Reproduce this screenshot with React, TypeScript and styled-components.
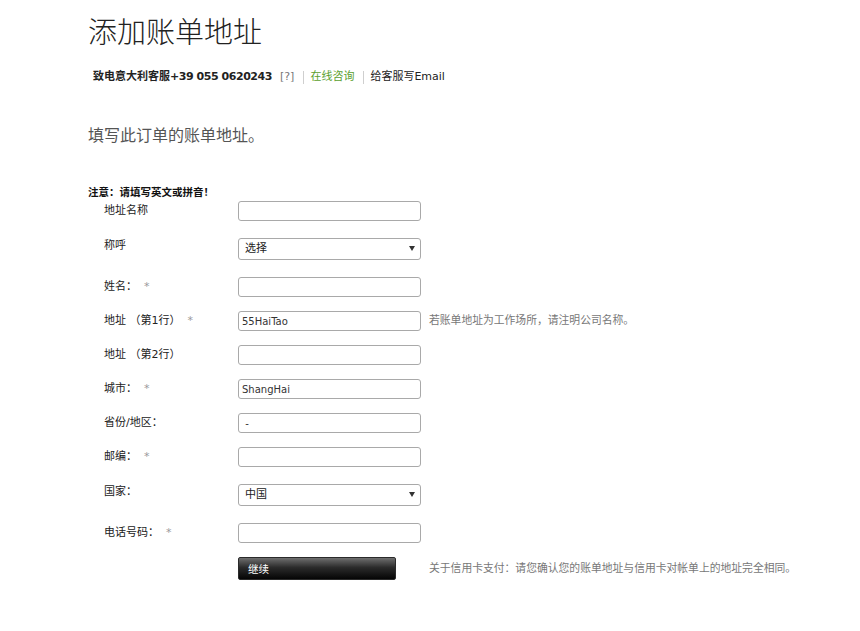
import React from "react";
import styled, { createGlobalStyle } from "styled-components";

const GlobalStyle = createGlobalStyle`
  html, body {
    margin: 0;
    padding: 0;
    background: #ffffff;
  }
  body {
    font-family: "DejaVu Sans", "Noto Sans CJK SC", sans-serif;
    color: #222;
  }
`;

const Page = styled.div`
  padding: 16px 0 40px 88px;
  width: 772px;
`;

const Title = styled.h1`
  margin: 0;
  font-family: "Liberation Serif", "Noto Sans CJK SC", serif;
  font-weight: 300;
  font-size: 29px;
  line-height: 35px;
  color: #222;
`;

const ContactBar = styled.div`
  margin-top: 19px;
  padding-left: 5px;
  display: flex;
  align-items: center;
  font-size: 11px;
  line-height: 14px;
  color: #222;
`;

const Phone = styled.span`
  font-weight: bold;
`;

const PhoneNumber = styled.span`
  letter-spacing: -0.45px;
`;

const Help = styled.span`
  color: #777;
  margin-left: 8px;
`;

const Sep = styled.span`
  display: inline-block;
  width: 1px;
  height: 13px;
  background: #cfcfcf;
  margin: 0 6px 0 9px;
`;

const BarLink = styled.a<{ $green?: boolean }>`
  color: ${(p) => (p.$green ? "#5c9f2f" : "#222")};
  text-decoration: none;
`;

const Subtitle = styled.h2`
  margin: 42px 0 0;
  font-family: "Liberation Serif", "Noto Sans CJK SC", serif;
  font-weight: normal;
  font-size: 16px;
  line-height: 20px;
  color: #555;
`;

const Note = styled.p`
  margin: 40px 0 0;
  font-size: 10.5px;
  line-height: 12px;
  font-weight: bold;
  color: #111;
`;

const Form = styled.form`
  margin-top: 3px;
  display: flex;
  flex-direction: column;
`;

const Row = styled.div<{ $select?: boolean; $last?: boolean }>`
  display: flex;
  align-items: ${(p) => (p.$last ? "center" : "flex-start")};
  padding-top: ${(p) => (p.$select ? "2px" : "0")};
  padding-bottom: ${(p) => (p.$select ? "18px" : p.$last ? "0" : "14px")};
`;

const Label = styled.label<{ $select?: boolean }>`
  width: 134px;
  flex: none;
  padding-left: 16px;
  font-size: 11px;
  line-height: 20px;
  margin-top: ${(p) => (p.$select ? "-1px" : "0")};
  color: #222;
  white-space: pre;
`;

const Star = styled.span`
  color: #999;
  margin-left: 7px;
`;

const TextInput = styled.input`
  box-sizing: border-box;
  width: 183px;
  height: 20px;
  border: 1px solid #a9a9a9;
  border-radius: 3px;
  padding: 0 3px;
  font-family: "DejaVu Sans", "Noto Sans CJK SC", sans-serif;
  font-size: 10px;
  color: #333;
  background: #fff;
  outline: none;
`;

const SelectWrap = styled.div`
  position: relative;
  width: 183px;
  height: 22px;
  &::after {
    content: "";
    position: absolute;
    right: 6px;
    top: 9px;
    border-left: 3px solid transparent;
    border-right: 3px solid transparent;
    border-top: 5px solid #333;
    pointer-events: none;
  }
`;

const Select = styled.select`
  appearance: none;
  box-sizing: border-box;
  width: 100%;
  height: 22px;
  border: 1px solid #a9a9a9;
  border-radius: 3px;
  padding: 0 6px;
  font-family: "DejaVu Sans", "Noto Sans CJK SC", sans-serif;
  font-size: 11px;
  color: #222;
  background: #fff;
  outline: none;
`;

const Hint = styled.span`
  margin-left: 8px;
  font-size: 10.8px;
  line-height: 20px;
  color: #777;
  white-space: nowrap;
`;

const Spacer = styled.div`
  width: 150px;
  flex: none;
`;

const Button = styled.button`
  box-sizing: border-box;
  width: 158px;
  height: 23px;
  border: 1px solid #2a2a2a;
  border-radius: 2px;
  background: linear-gradient(to bottom, #6e6e6e 0%, #2b2b2b 45%, #050505 100%);
  color: #fff;
  text-align: left;
  padding: 0 9px;
  font-family: "DejaVu Sans", "Noto Sans CJK SC", sans-serif;
  font-size: 10.5px;
  cursor: pointer;
`;

const ButtonHint = styled(Hint)`
  margin-left: 33px;
`;

type Field = {
  label: string;
  required?: boolean;
  select?: string[];
  value?: string;
  hint?: string;
};

const fields: Field[] = [
  { label: "地址名称" },
  { label: "称呼", select: ["选择", "先生", "女士"] },
  { label: "姓名：", required: true },
  { label: "地址 （第1行）", required: true, value: "55HaiTao", hint: "若账单地址为工作场所，请注明公司名称。" },
  { label: "地址 （第2行）" },
  { label: "城市：", required: true, value: "ShangHai" },
  { label: "省份/地区：", value: " -" },
  { label: "邮编：", required: true },
  { label: "国家：", select: ["中国", "意大利"] },
  { label: "电话号码：", required: true },
];

export default function App() {
  return (
    <>
      <GlobalStyle />
      <Page>
        <Title>添加账单地址</Title>
        <ContactBar>
          <Phone>
            致电意大利客服<PhoneNumber>+39 055 0620243</PhoneNumber>
          </Phone>
          <Help>[?]</Help>
          <Sep />
          <BarLink $green href="#">在线咨询</BarLink>
          <Sep />
          <BarLink href="#">给客服写Email</BarLink>
        </ContactBar>
        <Subtitle>填写此订单的账单地址。</Subtitle>
        <Note>注意：请填写英文或拼音！</Note>
        <Form onSubmit={(e) => e.preventDefault()}>
          {fields.map((f) => (
            <Row key={f.label} $select={!!f.select}>
              <Label $select={!!f.select}>
                {f.label}
                {f.required && <Star>*</Star>}
              </Label>
              {f.select ? (
                <SelectWrap>
                  <Select defaultValue={f.select[0]}>
                    {f.select.map((o) => (
                      <option key={o}>{o}</option>
                    ))}
                  </Select>
                </SelectWrap>
              ) : (
                <TextInput type="text" defaultValue={f.value} />
              )}
              {f.hint && <Hint>{f.hint}</Hint>}
            </Row>
          ))}
          <Row $last>
            <Spacer />
            <Button type="submit">继续</Button>
            <ButtonHint>关于信用卡支付：请您确认您的账单地址与信用卡对帐单上的地址完全相同。</ButtonHint>
          </Row>
        </Form>
      </Page>
    </>
  );
}
